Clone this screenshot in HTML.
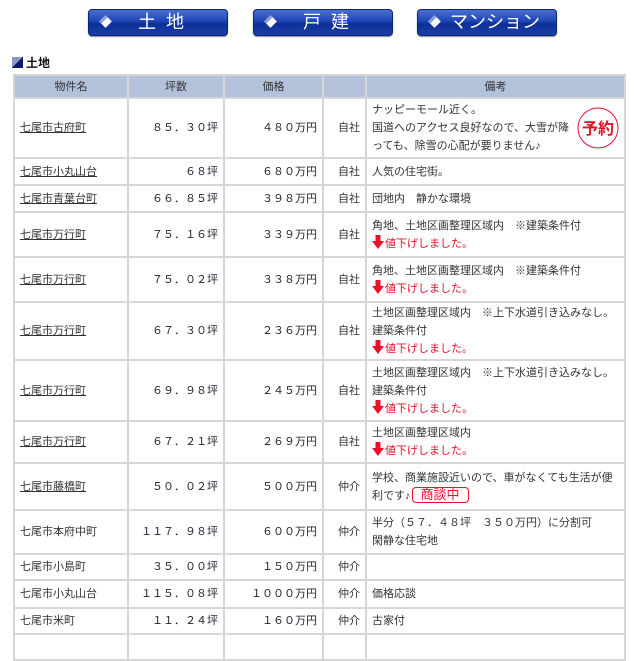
<!DOCTYPE html>
<html><head><meta charset="utf-8">
<style>
*{margin:0;padding:0;box-sizing:border-box}
body{width:638px;height:640px;overflow:hidden;background:#fff;font-family:"Liberation Sans","Noto Sans CJK JP",sans-serif;font-size:11px;color:#333;position:relative}
.btn{position:absolute;top:9px;width:140px;height:27px;border-radius:4px;background:linear-gradient(#4a6fd0 0%,#1e45b5 45%,#0d2f96 55%,#1b3fa8 100%);border:1px solid #0a2577;color:#fff;font-size:18px;line-height:25px;box-shadow:0 1px 1px #889}
.btn .d{position:absolute;left:12px;top:7px;width:9px;height:9px;background:#fff;transform:rotate(45deg);border-left:3px solid #8aa0e0}
.btn span.t{position:absolute;left:0;right:0;text-align:center;padding-left:16px;letter-spacing:10px}
h2{position:absolute;left:12px;top:54px;font-size:12px;font-weight:bold;color:#111}
h2 i{display:inline-block;width:11px;height:11px;background:linear-gradient(135deg,#8a97c8 50%,#0c1a70 50%);vertical-align:-1px;margin-right:3px}
table{position:absolute;left:13px;top:74px;width:613px;border-collapse:collapse}
td,th{border:2px solid #d6d6d6;padding:0 5px;vertical-align:middle;line-height:18px}
th{background:#b3c1da;font-weight:normal;height:23px;color:#333}
td.n,td.p{text-align:right;color:#223;white-space:nowrap}
td.s{text-align:right}
a{color:#333;text-decoration:underline}
.r{color:#e8102a}
.ar{display:inline-block;vertical-align:-2px;margin-right:1px}
.badge{display:inline-block;border:1px solid #e8102a;border-radius:4px;color:#e8102a;font-size:13px;line-height:14px;padding:0 8px;margin-left:1px}
</style></head><body>
<div class="btn" style="left:88px"><i class="d"></i><span class="t">土地</span></div>
<div class="btn" style="left:253px"><i class="d"></i><span class="t">戸建</span></div>
<div class="btn" style="left:417px"><i class="d"></i><span class="t" style="letter-spacing:0">マンション</span></div>
<h2><i></i>土地</h2>
<svg width="0" height="0" style="position:absolute"><defs><symbol id="a" viewBox="0 0 12 14"><rect x="3.5" y="0" width="5" height="7" fill="#e8102a"/><path d="M0 6H12L6 14Z" fill="#e8102a"/></symbol></defs></svg>
<table>
<colgroup><col style="width:114px"><col style="width:96px"><col style="width:99px"><col style="width:43px"><col></colgroup>
<tr><th>物件名</th><th>坪数</th><th>価格</th><th></th><th>備考</th></tr>
<tr style="height:60px"><td><a>七尾市古府町</a></td><td class="n">８５．３０坪</td><td class="p">４８０万円</td><td class="s">自社</td><td style="position:relative">ナッピーモール近く。<br>国道へのアクセス良好なので、大雪が降<br>っても、除雪の心配が要りません♪<svg style="position:absolute;right:5px;top:8px" width="42" height="42"><circle cx="21" cy="21" r="20" fill="none" stroke="#e8102a" stroke-width="1"/><text x="21" y="27" text-anchor="middle" font-size="16" font-weight="bold" fill="#e8102a" font-family="Noto Sans CJK JP">予約</text></svg></td></tr>
<tr style="height:27px"><td><a>七尾市小丸山台</a></td><td class="n">６８坪</td><td class="p">６８０万円</td><td class="s">自社</td><td>人気の住宅街。</td></tr>
<tr style="height:27px"><td><a>七尾市青葉台町</a></td><td class="n">６６．８５坪</td><td class="p">３９８万円</td><td class="s">自社</td><td>団地内　静かな環境</td></tr>
<tr style="height:45px"><td><a>七尾市万行町</a></td><td class="n">７５．１６坪</td><td class="p">３３９万円</td><td class="s">自社</td><td>角地、土地区画整理区域内　※建築条件付<br><svg class="ar" width="12" height="14"><use href="#a"/></svg><span class="r">値下げしました。</span></td></tr>
<tr style="height:45px"><td><a>七尾市万行町</a></td><td class="n">７５．０２坪</td><td class="p">３３８万円</td><td class="s">自社</td><td>角地、土地区画整理区域内　※建築条件付<br><svg class="ar" width="12" height="14"><use href="#a"/></svg><span class="r">値下げしました。</span></td></tr>
<tr style="height:58px"><td><a>七尾市万行町</a></td><td class="n">６７．３０坪</td><td class="p">２３６万円</td><td class="s">自社</td><td>土地区画整理区域内　※上下水道引き込みなし。<br>建築条件付<br><svg class="ar" width="12" height="14"><use href="#a"/></svg><span class="r">値下げしました。</span></td></tr>
<tr style="height:61px"><td><a>七尾市万行町</a></td><td class="n">６９．９８坪</td><td class="p">２４５万円</td><td class="s">自社</td><td>土地区画整理区域内　※上下水道引き込みなし。<br>建築条件付<br><svg class="ar" width="12" height="14"><use href="#a"/></svg><span class="r">値下げしました。</span></td></tr>
<tr style="height:42px"><td><a>七尾市万行町</a></td><td class="n">６７．２１坪</td><td class="p">２６９万円</td><td class="s">自社</td><td>土地区画整理区域内<br><svg class="ar" width="12" height="14"><use href="#a"/></svg><span class="r">値下げしました。</span></td></tr>
<tr style="height:47px"><td><a>七尾市藤橋町</a></td><td class="n">５０．０２坪</td><td class="p">５００万円</td><td class="s">仲介</td><td>学校、商業施設近いので、車がなくても生活が便<br>利です♪<span class="badge">商談中</span></td></tr>
<tr style="height:44px"><td>七尾市本府中町</td><td class="n">１１７．９８坪</td><td class="p">６００万円</td><td class="s">仲介</td><td>半分（５７．４８坪　３５０万円）に分割可<br>閑静な住宅地</td></tr>
<tr style="height:26px"><td>七尾市小島町</td><td class="n">３５．００坪</td><td class="p">１５０万円</td><td class="s">仲介</td><td></td></tr>
<tr style="height:28px"><td>七尾市小丸山台</td><td class="n">１１５．０８坪</td><td class="p">１０００万円</td><td class="s">仲介</td><td>価格応談</td></tr>
<tr style="height:26px"><td>七尾市米町</td><td class="n">１１．２４坪</td><td class="p">１６０万円</td><td class="s">仲介</td><td>古家付</td></tr>
<tr style="height:26px"><td></td><td></td><td></td><td></td><td></td></tr>
</table>
</body></html>
